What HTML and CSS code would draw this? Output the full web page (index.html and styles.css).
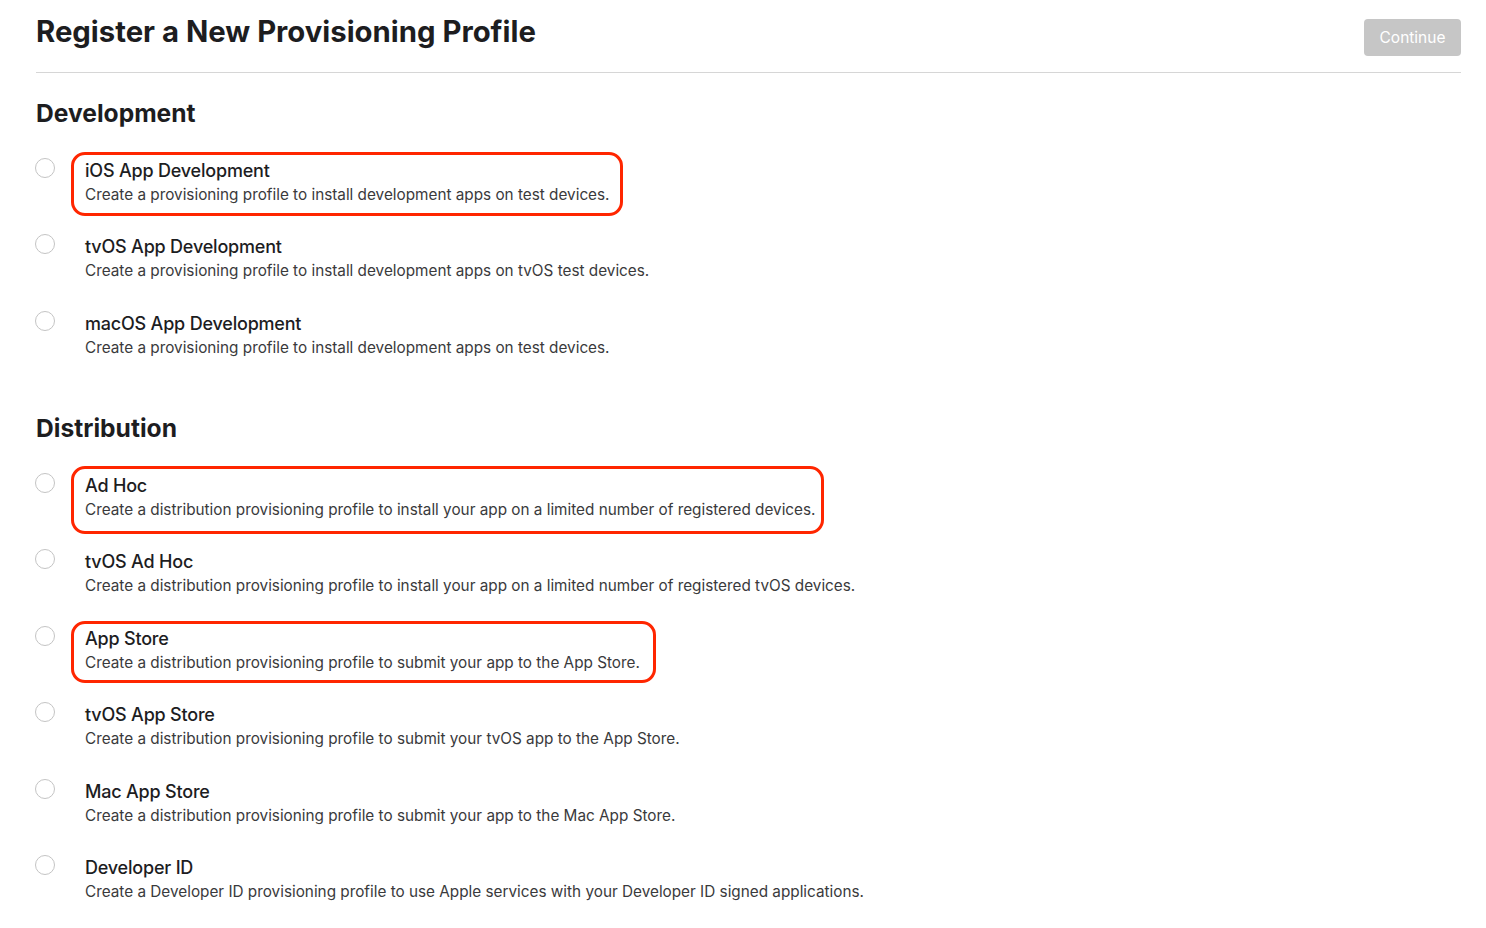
FILE: index.html
```html
<!DOCTYPE html>
<html lang="en">
<head>
<meta charset="utf-8">
<title>Register a New Provisioning Profile</title>
<link rel="stylesheet" href="styles.css">
</head>
<body>
<div class="page">
  <header class="header">
    <h1 class="title">Register a New Provisioning Profile</h1>
    <button class="continue" disabled>Continue</button>
  </header>

  <section class="group">
    <h2 class="group-title">Development</h2>
    <ul class="options">
      <li class="option">
        <span class="radio"></span>
        <div class="text marked mark-ios">
          <div class="name">iOS App Development</div>
          <div class="desc">Create a provisioning profile to install development apps on test devices.</div>
        </div>
      </li>
      <li class="option">
        <span class="radio"></span>
        <div class="text">
          <div class="name">tvOS App Development</div>
          <div class="desc">Create a provisioning profile to install development apps on tvOS test devices.</div>
        </div>
      </li>
      <li class="option">
        <span class="radio"></span>
        <div class="text">
          <div class="name">macOS App Development</div>
          <div class="desc">Create a provisioning profile to install development apps on test devices.</div>
        </div>
      </li>
    </ul>
  </section>

  <section class="group dist">
    <h2 class="group-title">Distribution</h2>
    <ul class="options">
      <li class="option">
        <span class="radio"></span>
        <div class="text marked mark-adhoc">
          <div class="name">Ad Hoc</div>
          <div class="desc">Create a distribution provisioning profile to install your app on a limited number of registered devices.</div>
        </div>
      </li>
      <li class="option">
        <span class="radio"></span>
        <div class="text">
          <div class="name">tvOS Ad Hoc</div>
          <div class="desc">Create a distribution provisioning profile to install your app on a limited number of registered tvOS devices.</div>
        </div>
      </li>
      <li class="option">
        <span class="radio"></span>
        <div class="text marked mark-store">
          <div class="name">App Store</div>
          <div class="desc">Create a distribution provisioning profile to submit your app to the App Store.</div>
        </div>
      </li>
      <li class="option">
        <span class="radio"></span>
        <div class="text">
          <div class="name">tvOS App Store</div>
          <div class="desc">Create a distribution provisioning profile to submit your tvOS app to the App Store.</div>
        </div>
      </li>
      <li class="option">
        <span class="radio"></span>
        <div class="text">
          <div class="name">Mac App Store</div>
          <div class="desc">Create a distribution provisioning profile to submit your app to the Mac App Store.</div>
        </div>
      </li>
      <li class="option">
        <span class="radio"></span>
        <div class="text">
          <div class="name">Developer ID</div>
          <div class="desc">Create a Developer ID provisioning profile to use Apple services with your Developer ID signed applications.</div>
        </div>
      </li>
    </ul>
  </section>
</div>
</body>
</html>
```

FILE: styles.css
```css
* { box-sizing: border-box; }

html, body {
  margin: 0;
  padding: 0;
  background: #ffffff;
}

body {
  font-family: Inter, "Noto Sans", "Liberation Sans", sans-serif;
  color: #1d1d1f;
}

.page {
  padding: 0 25px 0 36px;
}

.header {
  display: flex;
  justify-content: space-between;
  align-items: flex-start;
  padding: 12px 0 16px;
  border-bottom: 1px solid #d6d6d6;
}

.title {
  margin: 0;
  font-size: 29.3px;
  line-height: 40px;
  font-weight: 700;
  letter-spacing: 0;
  color: #1d1d1f;
}

.continue {
  margin-top: 7px;
  width: 97px;
  height: 37px;
  border: none;
  border-radius: 4px;
  background: #c6c6c6;
  color: #ffffff;
  font-family: inherit;
  font-size: 15.5px;
  padding: 0;
}

.group {
  padding-top: 24px;
}

.group.dist {
  padding-top: 52px;
}

.group-title {
  margin: 0;
  font-size: 24.6px;
  line-height: 32px;
  font-weight: 700;
  letter-spacing: 0;
}

.options {
  list-style: none;
  margin: 0;
  padding: 0;
}

.option {
  display: flex;
  align-items: flex-start;
  margin-top: 28.45px;
}

.option:first-child {
  margin-top: 30px;
}

.radio {
  flex: none;
  width: 20px;
  height: 20px;
  margin: -1px 30px 0 -1px;
  border-radius: 50%;
  border: 1.5px solid #c4c4c4;
  background: #fff;
}

.text {
  position: relative;
}

.name {
  font-size: 18px;
  line-height: 24px;
  font-weight: 500;
  letter-spacing: -0.2px;
  color: #1d1d1f;
}

.desc {
  font-size: 15.3px;
  line-height: 24px;
  color: #3a3a3c;
  letter-spacing: 0;
}

.marked::after {
  content: "";
  position: absolute;
  top: -7px;
  bottom: -9px;
  left: -14px;
  right: -13px;
  border: 3px solid #ff2600;
  border-radius: 14px;
  pointer-events: none;
}

.mark-adhoc::after {
  top: -8px;
  bottom: -12px;
  right: -8px;
}

.mark-store::after {
  top: -6px;
  bottom: -8px;
  right: -16px;
}
```
